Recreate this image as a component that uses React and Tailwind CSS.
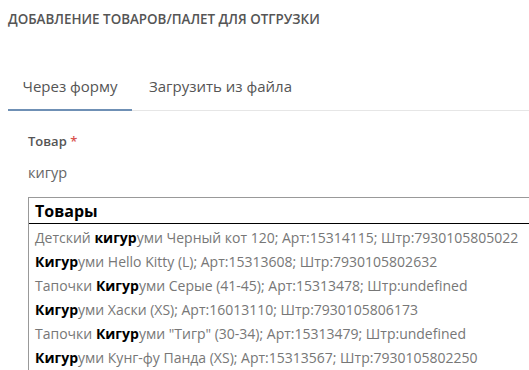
export default function App() {
  const rows = [
    [["Детский ", false], ["кигур", true], ["уми Черный кот 120; Арт:15314115; Штр:7930105805022", false]],
    [["Кигур", true], ["уми Hello Kitty (L); Арт:15313608; Штр:7930105802632", false]],
    [["Тапочки ", false], ["Кигур", true], ["уми Серые (41-45); Арт:15313478; Штр:undefined", false]],
    [["Кигур", true], ["уми Хаски (XS); Арт:16013110; Штр:7930105806173", false]],
    [["Тапочки ", false], ["Кигур", true], ["уми \"Тигр\" (30-34); Арт:15313479; Штр:undefined", false]],
    [["Кигур", true], ["уми Кунг-фу Панда (XS); Арт:15313567; Штр:7930105802250", false]],
  ];
  return (
    <div className="w-[529px] h-[370px] overflow-hidden bg-white font-['Open_Sans',sans-serif]">
      <div className="pl-[8px] pt-[10px] h-[40px] text-[13.4px] font-semibold text-[#555] leading-[18px] whitespace-nowrap">
        ДОБАВЛЕНИЕ ТОВАРОВ/ПАЛЕТ ДЛЯ ОТГРУЗКИ
      </div>
      <div className="ml-[8px] mt-[29px] flex border-b border-[#e6e6e6]">
        <div className="w-[124px] text-center text-[15px] text-[#555] pt-[7px] pb-[13px] border-b-2 border-[#6f90b5] -mb-[1px] leading-[20px] whitespace-nowrap">
          Через форму
        </div>
        <div className="pl-[17px] text-[15px] text-[#555] pt-[7px] leading-[20px] whitespace-nowrap">
          Загрузить из файла
        </div>
      </div>
      <div className="pl-[28px] pt-[21px]">
        <div className="text-[13px] font-semibold text-[#555] leading-[18px]">
          Товар <span className="text-[#d9534f]">*</span>
        </div>
        <div className="mt-[13px] text-[14.5px] text-[#666] leading-[20px]">кигур</div>
        <div className="mt-[14px] border-l border-t border-[#999] h-[200px]">
          <div className="px-[6px] pt-[3px] h-[26px] text-[16px] font-bold text-black leading-[20px] border-b border-black">
            Товары
          </div>
          <div className="pt-[2px]">
            {rows.map((r, i) => (
              <div key={i} className="px-[6px] h-[24px] leading-[24px] text-[14px] text-[#777] whitespace-nowrap">
                {r.map(([t, b], j) => (
                  <span key={j} className={b ? "font-bold text-black" : ""}>{t}</span>
                ))}
              </div>
            ))}
          </div>
        </div>
      </div>
    </div>
  );
}
